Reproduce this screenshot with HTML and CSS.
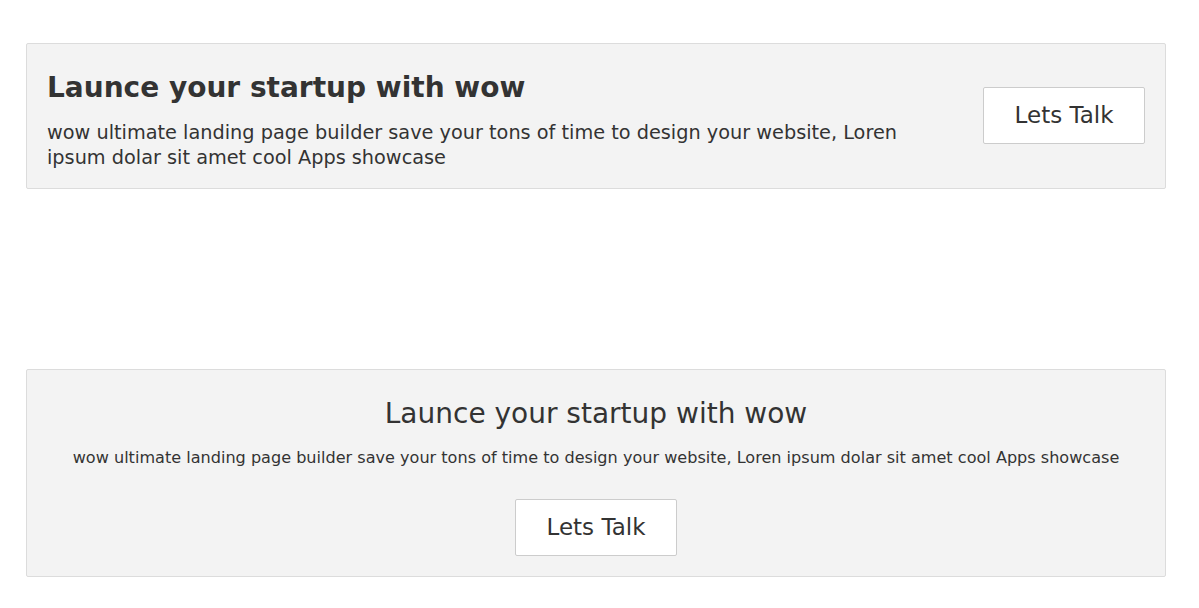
FILE: index.html
```html
<!DOCTYPE html>
<html>
<head>
<meta charset="utf-8">
<link rel="stylesheet" href="styles.css">
</head>
<body>
<div class="page">
  <section class="cta cta-row">
    <div class="cta-text">
      <h2 class="cta-title bold">Launce your startup with wow</h2>
      <p class="cta-desc large">wow ultimate landing page builder save your tons of time to design your website, Loren ipsum dolar sit amet cool Apps showcase</p>
    </div>
    <a class="btn" href="#">Lets Talk</a>
  </section>
  <section class="cta cta-center">
    <h2 class="cta-title">Launce your startup with wow</h2>
    <p class="cta-desc">wow ultimate landing page builder save your tons of time to design your website, Loren ipsum dolar sit amet cool Apps showcase</p>
    <a class="btn" href="#">Lets Talk</a>
  </section>
</div>
</body>
</html>
```
FILE: styles.css
```css
* { box-sizing: border-box; }
html, body { margin: 0; padding: 0; background: #fff; }
body {
  font-family: "DejaVu Sans", Verdana, sans-serif;
  color: #333;
}
.page {
  width: 1140px;
  margin: 43px 0 0 26px;
  display: flex;
  flex-direction: column;
  gap: 180px;
}
.cta {
  background: #f3f3f3;
  border: 1px solid #dcdcdc;
  border-radius: 2px;
}
.cta-row {
  display: flex;
  align-items: center;
  justify-content: space-between;
  padding: 27px 20px 18px;
}
.cta-text { width: 880px; }
.cta-title {
  margin: 0;
  font-size: 28px;
  font-weight: normal;
  line-height: 34px;
}
.cta-title.bold { font-weight: bold; }
.cta-desc {
  margin: 16px 0 0;
  font-size: 16.08px;
  line-height: 22px;
}
.cta-desc.large {
  font-size: 19.3px;
  line-height: 25px;
  margin-top: 15px;
}
.cta-center {
  display: flex;
  flex-direction: column;
  align-items: center;
  text-align: center;
  padding: 27px 20px 20px;
}
.btn {
  display: inline-block;
  background: #fff;
  border: 1px solid #ccc;
  border-radius: 2px;
  color: #333;
  text-decoration: none;
  font-size: 23px;
  line-height: 25px;
  padding: 15px 30.5px;
}
.cta-row .btn { margin-top: -11px; }
.cta-center .btn { margin-top: 30px; }
```
